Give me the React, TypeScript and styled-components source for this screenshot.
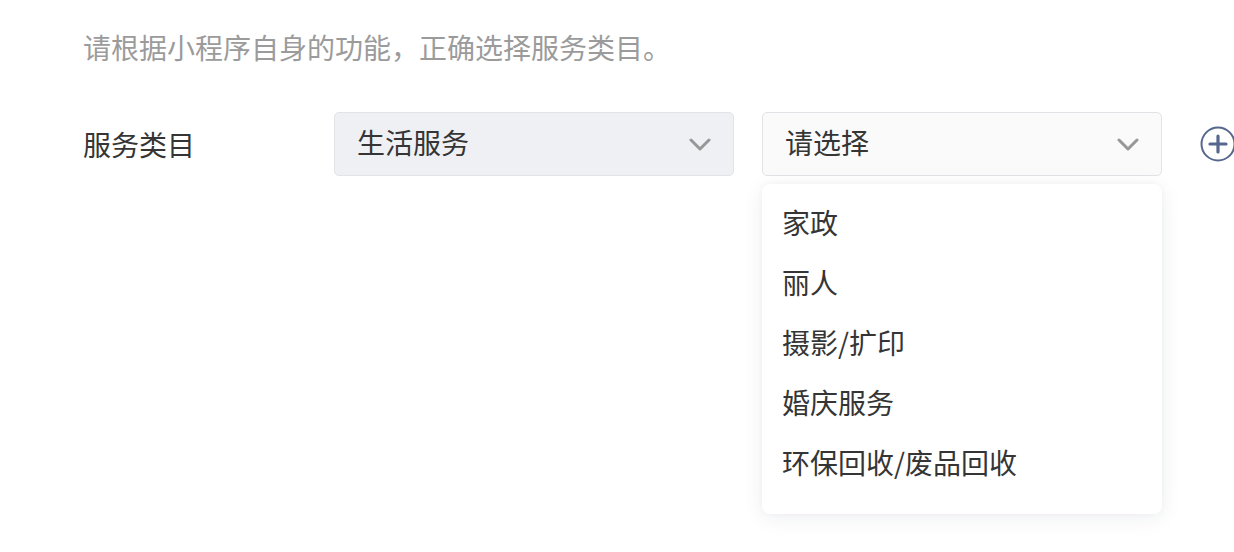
import React from "react";
import styled, { createGlobalStyle } from "styled-components";

const Global = createGlobalStyle`
  html { margin: 0; padding: 0; background: #ffffff; overflow: hidden; }
  body { margin: 0; padding: 0; min-height: 100vh; font-family: "Noto Sans CJK SC", "Noto Sans", sans-serif; }
`;

const Page = styled.div`
  padding: 27px 0 0 83px;
  width: 1234px;
  min-height: 552px;
  box-sizing: border-box;
`;

const Hint = styled.div`
  font-size: 28px;
  line-height: 40px;
  color: #9b9b9b;
  margin-bottom: 45px;
  white-space: nowrap;
`;

const Row = styled.div`
  display: flex;
  align-items: flex-start;
  width: max-content;
`;

const Label = styled.div`
  width: 251px;
  flex: none;
  font-size: 28px;
  line-height: 64px;
  color: #353535;
`;

const SelectWrap = styled.div<{ $gap: number }>`
  position: relative;
  flex: none;
  margin-right: ${(p) => p.$gap}px;
`;

const Select = styled.div<{ $filled?: boolean }>`
  width: 400px;
  height: 64px;
  box-sizing: border-box;
  border: 1px solid #e1e3e7;
  border-radius: 5px;
  background: ${(p) => (p.$filled ? "#eff0f3" : "#fafafa")};
  display: flex;
  align-items: center;
  justify-content: space-between;
  padding: 0 22px 4px 22px;
  font-size: 28px;
  color: #353535;
`;

const Chevron = () => (
  <svg width="22" height="14" viewBox="0 0 22 14" style={{ marginTop: 5 }}>
    <polyline
      points="2,2 11,11 20,2"
      fill="none"
      stroke="#979797"
      strokeWidth="3"
      strokeLinecap="round"
      strokeLinejoin="round"
    />
  </svg>
);

const Menu = styled.div`
  position: absolute;
  top: 72px;
  left: 0;
  width: 400px;
  box-sizing: border-box;
  background: #ffffff;
  border-radius: 8px;
  box-shadow: 0 4px 22px rgba(30, 40, 70, 0.07), 0 0 6px rgba(30, 40, 70, 0.04);
  padding: 8px 0 22px;
  z-index: 2;
`;

const Item = styled.div`
  height: 60px;
  line-height: 60px;
  padding-left: 20px;
  font-size: 28px;
  color: #353535;
  white-space: nowrap;
`;

const AddButton = styled.div`
  flex: none;
  margin-top: 14px;
  width: 36px;
  height: 36px;
`;

const PlusIcon = () => (
  <svg width="36" height="36" viewBox="0 0 36 36">
    <circle cx="18" cy="18" r="16.5" fill="none" stroke="#56678e" strokeWidth="2" />
    <line x1="10" y1="18" x2="26" y2="18" stroke="#56678e" strokeWidth="3.2" strokeLinecap="round" />
    <line x1="18" y1="10" x2="18" y2="26" stroke="#56678e" strokeWidth="3.2" strokeLinecap="round" />
  </svg>
);

const options = ["家政", "丽人", "摄影/扩印", "婚庆服务", "环保回收/废品回收"];

export default function App() {
  return (
    <>
      <Global />
      <Page>
        <Hint>请根据小程序自身的功能，正确选择服务类目。</Hint>
        <Row>
          <Label>服务类目</Label>
          <SelectWrap $gap={28}>
            <Select $filled>
              <span>生活服务</span>
              <Chevron />
            </Select>
          </SelectWrap>
          <SelectWrap $gap={38}>
            <Select>
              <span>请选择</span>
              <Chevron />
            </Select>
            <Menu>
              {options.map((o) => (
                <Item key={o}>{o}</Item>
              ))}
            </Menu>
          </SelectWrap>
          <AddButton>
            <PlusIcon />
          </AddButton>
        </Row>
      </Page>
    </>
  );
}
